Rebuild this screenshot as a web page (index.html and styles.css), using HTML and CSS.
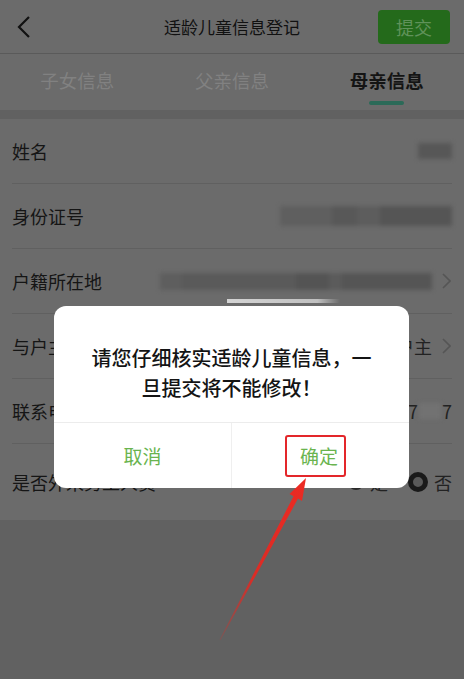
FILE: index.html
```html
<!DOCTYPE html>
<html lang="zh-CN">
<head>
    <meta charset="UTF-8">
    <meta name="viewport" content="width=device-width, initial-scale=1.0">
    <title>适龄儿童信息登记</title>
    <link rel="stylesheet" href="styles.css">
</head>
<body>
    <div class="header">
        <svg class="back" width="14" height="22" viewBox="0 0 14 22">
            <path d="M12 1 L2 11 L12 21" fill="none" stroke="#111" stroke-width="2.2"/>
        </svg>
        <div class="title">适龄儿童信息登记</div>
        <button class="submit">提交</button>
    </div>

    <div class="tabs">
        <div class="tab">子女信息</div>
        <div class="tab">父亲信息</div>
        <div class="tab active">母亲信息</div>
    </div>

    <div class="list">
        <div class="row">
            <span class="label">姓名</span>
            <span class="value"><span class="blur short"></span></span>
        </div>
        <div class="row">
            <span class="label">身份证号</span>
            <span class="value"><span class="blur idcard"></span></span>
        </div>
        <div class="row">
            <span class="label">户籍所在地</span>
            <span class="value">
                <span class="blur address"></span>
                <svg class="arrow" width="9" height="16" viewBox="0 0 9 16"><path d="M1 1 L8 8 L1 15" fill="none" stroke="#555" stroke-width="1.6"/></svg>
            </span>
        </div>
        <div class="row">
            <span class="label">与户主关系</span>
            <span class="value">
                户主
                <svg class="arrow" width="9" height="16" viewBox="0 0 9 16"><path d="M1 1 L8 8 L1 15" fill="none" stroke="#555" stroke-width="1.6"/></svg>
            </span>
        </div>
        <div class="row">
            <span class="label">联系电话</span>
            <span class="value">1587<span class="blur phone"></span>7</span>
        </div>
        <div class="row last">
            <span class="label">是否外来务工人员</span>
            <span class="value radios">
                <span class="radio"></span>是
                <span class="radio checked"></span>否
            </span>
        </div>
    </div>

    <div class="toast-bar"></div>

    <div class="dialog">
        <div class="dialog-text">请您仔细核实适龄儿童信息，一旦提交将不能修改！</div>
        <div class="dialog-actions">
            <div class="btn">取消</div>
            <div class="btn"><span class="highlight">确定</span></div>
        </div>
    </div>

    <svg class="pointer" width="464" height="679" viewBox="0 0 464 679">
        <defs>
            <linearGradient id="fade" x1="220" y1="640" x2="306" y2="478" gradientUnits="userSpaceOnUse">
                <stop offset="0" stop-color="#e8261f" stop-opacity="0.2"/>
                <stop offset="0.4" stop-color="#e8261f" stop-opacity="0.9"/>
                <stop offset="1" stop-color="#ec2a22"/>
            </linearGradient>
        </defs>
        <polygon fill="url(#fade)" points="306,478 302,501 298,498.6 220.4,640.2 219.6,639.8 293.5,496.2 289.5,494"/>
    </svg>
</body>
</html>
```

FILE: styles.css
```css
body {
    margin: 0;
    width: 464px;
    height: 679px;
    overflow: hidden;
    position: relative;
    background: #616161;
    font-family: "Noto Sans CJK SC", "Noto Sans", sans-serif;
    color: #151515;
}

/* header (under the mask, so colours are dimmed) */
.header {
    display: grid;
    grid-template-columns: 1fr auto 1fr;
    align-items: center;
    height: 53px;
    background: #6b6b6b;
    border-bottom: 1px solid #5a5a5a;
}

.back {
    margin-left: 17px;
}

.title {
    font-size: 17px;
    color: #111;
}

.submit {
    justify-self: end;
    margin-right: 14px;
    width: 72px;
    height: 34px;
    border: none;
    border-radius: 4px;
    background: #246a1b;
    color: #60925a;
    font-family: inherit;
    font-size: 18px;
    padding: 0;
}

.tabs {
    display: flex;
    height: 56px;
    background: #6b6b6b;
}

.tab {
    flex: 1;
    display: flex;
    flex-direction: column;
    align-items: center;
    padding-top: 13px;
    font-size: 18.5px;
    line-height: 26px;
    color: #818181;
}

.tab.active {
    color: #141414;
    font-weight: bold;
}

.tab.active::after {
    content: "";
    width: 35px;
    height: 4px;
    margin-top: 8px;
    border-radius: 2px;
    background: #2b6a58;
}

.list {
    margin-top: 9px;
    background: #6b6b6b;
}

.row {
    display: flex;
    align-items: center;
    justify-content: space-between;
    height: 64px;
    margin: 0 12px;
    border-bottom: 1px solid #606060;
    font-size: 18px;
}

.row.last {
    height: 76px;
    border-bottom: none;
    align-items: flex-start;
    padding-top: 25px;
    box-sizing: border-box;
}

.value {
    display: flex;
    align-items: center;
    color: #222;
}

.blur {
    display: inline-block;
    height: 16px;
    background: #575757;
    filter: blur(2px);
}

.blur.short {
    width: 34px;
}

.blur.idcard {
    width: 172px;
    height: 20px;
    background: linear-gradient(90deg, #5f5f5f 0 30%, #585858 30% 45%, #5d5d5d 45% 58%, #555 58% 100%);
}

.blur.address {
    width: 272px;
    height: 17px;
    background: linear-gradient(90deg, #5e5e5e 0 8%, #5a5a5a 8% 50%, #545454 50% 62%, #5b5b5b 62% 67%, #555 67% 100%);
}

.blur.phone {
    width: 22px;
    margin: 0 1px;
    background: #727272;
}

.arrow {
    margin-left: 10px;
    margin-right: 1px;
}

.radios {
    gap: 6px;
}

.radio {
    width: 12px;
    height: 12px;
    border: 2px solid #2a2a2a;
    border-radius: 50%;
    margin-left: 14px;
}

.radio.checked {
    width: 10px;
    height: 10px;
    border: 5px solid #1a1a1a;
    background: #5a5a5a;
}

.toast-bar {
    position: absolute;
    left: 227px;
    top: 299px;
    width: 113px;
    height: 4px;
    background: linear-gradient(90deg, #d4d4d4, #c0c0c0 80%, rgba(200, 200, 200, 0));
}

/* confirm dialog */
.dialog {
    position: absolute;
    left: 54px;
    top: 306px;
    width: 355px;
    border-radius: 12px;
    background: #fff;
    overflow: hidden;
}

.dialog-text {
    padding: 37px 34px 19px;
    font-size: 20px;
    line-height: 30px;
    font-weight: 500;
    text-align: center;
    color: #141414;
}

.dialog-actions {
    display: flex;
    height: 65px;
    border-top: 1px solid #ececec;
}

.btn {
    flex: 1;
    display: flex;
    align-items: center;
    justify-content: center;
    font-size: 19px;
    color: #6ab44f;
}

.btn + .btn {
    border-left: 1px solid #efefef;
}

.highlight {
    padding: 6px 6px 6px 13px;
    margin-right: 10px;
    line-height: 26px;
    border: 2px solid #e3262a;
    border-radius: 3px;
}

.pointer {
    position: absolute;
    left: 0;
    top: 0;
    pointer-events: none;
}
```
